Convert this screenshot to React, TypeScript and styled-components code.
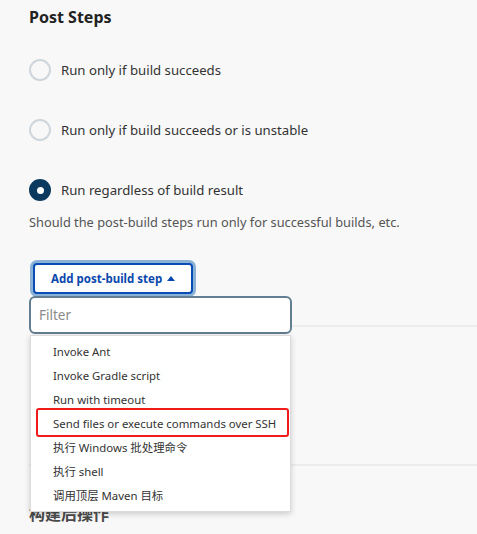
import React from "react";
import styled, { createGlobalStyle } from "styled-components";

const Global = createGlobalStyle`
  html, body { margin: 0; padding: 0; background: #f8f8f8; }
  body { font-family: "Noto Sans", "Noto Sans CJK SC", sans-serif; color: #333; overflow: hidden; }
  * { box-sizing: border-box; }
`;

const Page = styled.div`
  width: 477px;
  height: 534px;
  padding: 5px 0 0 29px;
  overflow: hidden;
`;

const Heading = styled.h2`
  margin: 0;
  font-size: 16px;
  font-weight: 700;
  color: #222;
  line-height: 24px;
`;

const RadioList = styled.div`
  display: flex;
  flex-direction: column;
  gap: 38px;
  margin-top: 30px;
`;

const RadioRow = styled.label`
  display: flex;
  align-items: center;
  gap: 10px;
  height: 22px;
  font-size: 13.2px;
  color: #333;
`;

const Circle = styled.span<{ $checked?: boolean }>`
  width: 22px;
  height: 22px;
  border-radius: 50%;
  flex: none;
  display: flex;
  align-items: center;
  justify-content: center;
  border: 2px solid ${(p) => (p.$checked ? "#0b3a5e" : "#cfd6dc")};
  background: ${(p) => (p.$checked ? "#0b3a5e" : "transparent")};
  &::after {
    content: "";
    display: ${(p) => (p.$checked ? "block" : "none")};
    width: 7px;
    height: 7px;
    border-radius: 50%;
    background: #fff;
  }
`;

const Description = styled.p`
  margin: 11px 0 0;
  font-size: 12.8px;
  color: #555;
  line-height: 20px;
`;

const Section = styled.div`
  position: relative;
  display: flex;
  flex-direction: column;
  align-items: flex-start;
  margin-top: 31px;
`;

const AddButton = styled.button`
  display: inline-flex;
  align-items: center;
  gap: 5px;
  height: 31px;
  padding: 0 16px 0 16px;
  background: #fff;
  border: 2px solid #0a4db6;
  border-radius: 4px;
  box-shadow: 0 0 0 3px #89b2d6;
  font-family: inherit;
  font-size: 11.5px;
  font-weight: 700;
  color: #0a48ad;
  margin-left: 4px;
`;

const Caret = styled.svg`
  width: 8px;
  height: 5px;
`;

const Separator = styled.div<{ $top: number }>`
  align-self: stretch;
  height: 2px;
  background: #ececec;
  margin-top: ${(p) => p.$top}px;
`;

const LowerHeading = styled.h2`
  margin: 36px 0 0;
  font-size: 16px;
  font-weight: 700;
  color: #4a4a4a;
  line-height: 24px;
`;

const Dropdown = styled.div`
  position: absolute;
  top: 33px;
  left: 0;
  width: 263px;
  z-index: 2;
`;

const FilterInput = styled.input`
  display: block;
  width: 263px;
  height: 38px;
  border: 2px solid #637e90;
  border-radius: 6px;
  background: #fff;
  padding: 0 8px;
  font-family: inherit;
  font-size: 13.5px;
  color: #333;
  outline: none;
  &::placeholder { color: #8a8a8a; }
`;

const Menu = styled.ul`
  list-style: none;
  margin: 1px 0 0 1px;
  padding: 4px 0 3px;
  width: 261px;
  background: #fff;
  border: 1px solid #dcdcdc;
  box-shadow: 0 2px 6px rgba(0, 0, 0, 0.18);
`;

const MenuItem = styled.li<{ $highlight?: boolean }>`
  position: relative;
  height: 24px;
  line-height: 24px;
  padding-left: 22px;
  font-size: 11.4px;
  color: #333;
  white-space: nowrap;
  &::after {
    content: "";
    display: ${(p) => (p.$highlight ? "block" : "none")};
    position: absolute;
    left: 5px;
    right: 1px;
    top: -4px;
    bottom: -1px;
    border: 2px solid #f01c1c;
    border-radius: 3px;
  }
`;

const items = [
  "Invoke Ant",
  "Invoke Gradle script",
  "Run with timeout",
  "Send files or execute commands over SSH",
  "执行 Windows 批处理命令",
  "执行 shell",
  "调用顶层 Maven 目标",
];

export default function App() {
  return (
    <Page>
      <Global />
      <Heading>Post Steps</Heading>
      <RadioList>
        <RadioRow>
          <Circle />
          Run only if build succeeds
        </RadioRow>
        <RadioRow>
          <Circle />
          Run only if build succeeds or is unstable
        </RadioRow>
        <RadioRow>
          <Circle $checked />
          Run regardless of build result
        </RadioRow>
      </RadioList>
      <Description>Should the post-build steps run only for successful builds, etc.</Description>
      <Section>
        <AddButton>
          Add post-build step
          <Caret viewBox="0 0 8 5">
            <path d="M0 5 L4 0 L8 5 Z" fill="#0a48ad" />
          </Caret>
        </AddButton>
        <Separator $top={31} />
        <Separator $top={137} />
        <LowerHeading>构建后操作</LowerHeading>
        <Dropdown>
          <FilterInput placeholder="Filter" />
          <Menu>
            {items.map((t, i) => (
              <MenuItem key={t} $highlight={i === 3}>
                {t}
              </MenuItem>
            ))}
          </Menu>
        </Dropdown>
      </Section>
    </Page>
  );
}
